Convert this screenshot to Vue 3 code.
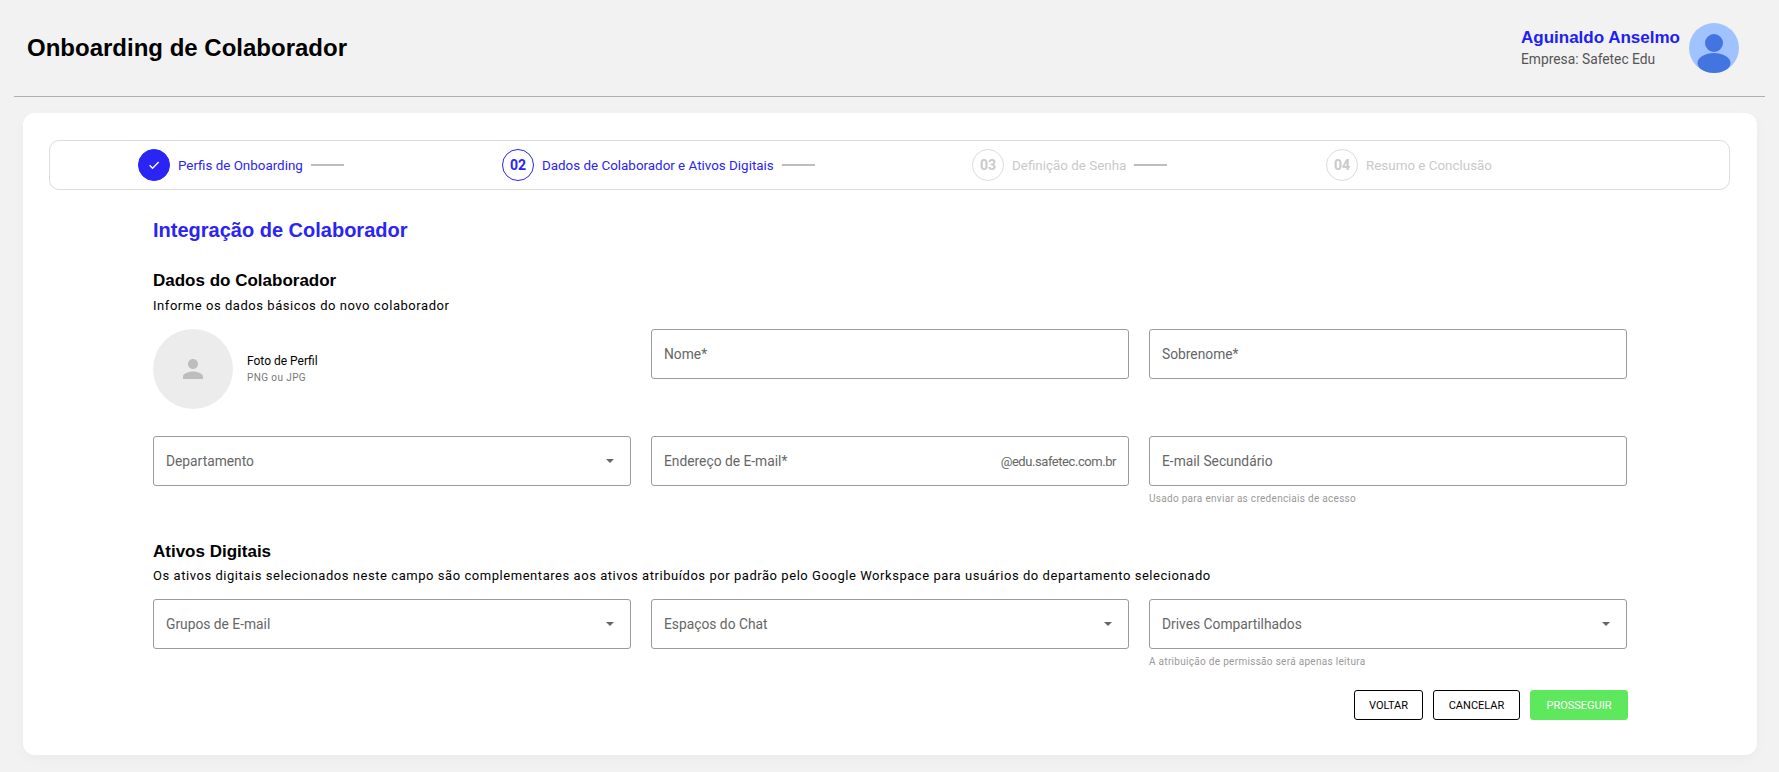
<script setup>
const steps = [
  { n: '', label: 'Perfis de Onboarding', state: 'done', line: true, w: 364 },
  { n: '02', label: 'Dados de Colaborador e Ativos Digitais', state: 'active', line: true, w: 470 },
  { n: '03', label: 'Definição de Senha', state: 'idle', line: true, w: 354 },
  { n: '04', label: 'Resumo e Conclusão', state: 'idle', line: false, w: 200 }
]
</script>

<template>
  <div class="page">
    <header class="top">
      <h1>Onboarding de Colaborador</h1>
      <div class="user">
        <div class="who">
          <div class="uname">Aguinaldo Anselmo</div>
          <div class="ucomp">Empresa: Safetec Edu</div>
        </div>
        <div class="avatar">
          <svg width="50" height="50" viewBox="0 0 50 50">
            <circle cx="25" cy="25" r="25" fill="#a0c3ff" />
            <circle cx="25" cy="20" r="9" fill="#4375e0" />
            <ellipse cx="25" cy="40" rx="16.5" ry="10" fill="#4375e0" />
          </svg>
        </div>
      </div>
    </header>

    <main class="card">
      <div class="stepper">
        <div v-for="s in steps" :key="s.label" class="step" :class="s.state" :style="{ width: s.w + 'px' }">
          <span class="dot">
            <svg v-if="s.state === 'done'" width="14" height="14" viewBox="0 0 24 24">
              <path d="M4.5 12.5l5 5L20 7" fill="none" stroke="#fff" stroke-width="2.4" />
            </svg>
            <template v-else>{{ s.n }}</template>
          </span>
          <span class="slabel">{{ s.label }}</span>
          <span v-if="s.line" class="sline"></span>
        </div>
      </div>

      <section class="form">
        <h2>Integração de Colaborador</h2>

        <h3 class="first">Dados do Colaborador</h3>
        <p class="desc">Informe os dados básicos do novo colaborador</p>

        <div class="grid r1">
          <div class="photo">
            <div class="pcircle">
              <svg width="30" height="30" viewBox="0 0 24 24">
                <path fill="#bdbdbd" d="M12 12c2.21 0 4-1.79 4-4s-1.79-4-4-4-4 1.79-4 4 1.79 4 4 4zm0 2c-2.67 0-8 1.34-8 4v2h16v-2c0-2.66-5.33-4-8-4z" />
              </svg>
            </div>
            <div>
              <div class="ptitle">Foto de Perfil</div>
              <div class="psub">PNG ou JPG</div>
            </div>
          </div>
          <div class="field"><span>Nome*</span></div>
          <div class="field"><span>Sobrenome*</span></div>
        </div>

        <div class="grid r2">
          <div class="field"><span>Departamento</span><i class="caret"></i></div>
          <div class="field"><span>Endereço de E-mail*</span><em>@edu.safetec.com.br</em></div>
          <div>
            <div class="field"><span>E-mail Secundário</span></div>
            <div class="hint">Usado para enviar as credenciais de acesso</div>
          </div>
        </div>

        <h3 class="second">Ativos Digitais</h3>
        <p class="desc d2">Os ativos digitais selecionados neste campo são complementares aos ativos atribuídos por padrão pelo Google Workspace para usuários do departamento selecionado</p>

        <div class="grid r3">
          <div class="field"><span>Grupos de E-mail</span><i class="caret"></i></div>
          <div class="field"><span>Espaços do Chat</span><i class="caret"></i></div>
          <div>
            <div class="field"><span>Drives Compartilhados</span><i class="caret"></i></div>
            <div class="hint">A atribuição de permissão será apenas leitura</div>
          </div>
        </div>

        <div class="actions">
          <button class="btn">VOLTAR</button>
          <button class="btn">CANCELAR</button>
          <button class="btn go">PROSSEGUIR</button>
        </div>
      </section>
    </main>
  </div>
</template>

<style>
html, body { margin: 0; background: #f2f2f2; }
</style>

<style scoped>
.page {
  width: 1779px;
  height: 772px;
  background: #f2f2f2;
  font-family: Roboto, "Liberation Sans", sans-serif;
  overflow: hidden;
  box-sizing: border-box;
  padding: 0 14px;
}
.top {
  height: 97px;
  border-bottom: 1px solid #b0b0b0;
  display: flex;
  align-items: center;
  justify-content: space-between;
  padding: 0 26px 0 13px;
  box-sizing: border-box;
}
h1 {
  margin: 0;
  font-family: "Liberation Sans", sans-serif;
  font-size: 24px;
  font-weight: 700;
  color: #000;
}
.user { display: flex; align-items: center; gap: 9px; }
.uname { font-family: "Liberation Sans", sans-serif; font-size: 17px; font-weight: 700; color: #2020f5; line-height: 20px; }
.ucomp { font-size: 13.8px; color: #555; line-height: 20px; margin-top: 1px; }
.avatar { height: 50px; }
.card {
  margin: 16px 8px 0 9px;
  height: 642px;
  box-sizing: border-box;
  background: #fff;
  border-radius: 12px;
  box-shadow: 0 4px 12px rgba(0, 0, 0, 0.03);
  padding: 27px 27px 0 26px;
}
.stepper {
  height: 50px;
  box-sizing: border-box;
  border: 1px solid #dcdcdc;
  border-radius: 10px;
  display: flex;
  align-items: center;
  padding-left: 88px;
}
.step { display: flex; align-items: center; flex: none; font-size: 13.4px; }
.dot {
  width: 32px;
  height: 32px;
  box-sizing: border-box;
  border-radius: 50%;
  border: 1px solid currentColor;
  display: flex;
  align-items: center;
  justify-content: center;
  font-weight: 700;
  font-size: 14px;
  flex: none;
}
.slabel { margin-left: 8px; white-space: nowrap; }
.sline { width: 33px; height: 2px; background: #bdbdbd; margin-left: 8px; }
.step.done, .step.active { color: #2a24f5; }
.step.done .dot { background: #2a24f5; border-color: #2a24f5; }
.step.idle { color: #c9c9c9; }
.step.idle .dot { border-color: #dcdcdc; }
.form { padding: 0 102px 0 104px; }
h2 {
  margin: 0;
  padding-top: 28px;
  font-family: "Liberation Sans", sans-serif;
  font-size: 20px;
  line-height: 24px;
  font-weight: 700;
  color: #2a24f5;
}
h3 {
  margin: 0;
  font-family: "Liberation Sans", sans-serif;
  font-size: 17px;
  line-height: 20px;
  font-weight: 700;
  color: #000;
}
h3.first { margin-top: 29px; }
h3.second { margin-top: 13px; }
.desc {
  margin: 6px 0 0;
  font-size: 13px;
  line-height: 18px;
  letter-spacing: 0.55px;
  color: #000;
}
.d2 { margin-top: 5px; }
.grid {
  display: grid;
  grid-template-columns: repeat(3, 478px);
  column-gap: 20px;
}
.r1 { margin-top: 14px; height: 107px; }
.r2 { height: 93px; }
.r3 { margin-top: 14px; }
.photo { display: flex; align-items: center; gap: 14px; height: 80px; }
.pcircle {
  width: 80px;
  height: 80px;
  border-radius: 50%;
  background: #ececec;
  display: flex;
  align-items: center;
  justify-content: center;
}
.ptitle { font-size: 12px; color: #000; line-height: 16px; }
.psub { font-size: 10px; color: #777; line-height: 14px; margin-top: 2px; letter-spacing: 0.4px; }
.field {
  height: 50px;
  box-sizing: border-box;
  border: 1px solid #9b9b9b;
  border-radius: 3px;
  display: flex;
  align-items: center;
  justify-content: space-between;
  padding: 0 12px;
  font-size: 13.8px;
  color: #666;
}
.field em { font-style: normal; color: #666; font-size: 13px; letter-spacing: -0.44px; }
.caret {
  width: 0;
  height: 0;
  border-left: 4px solid transparent;
  border-right: 4px solid transparent;
  border-top: 4px solid #666;
  margin-right: 4px;
}
.hint {
  font-size: 10px;
  color: #999;
  line-height: 14px;
  margin-top: 6px;
  letter-spacing: 0.3px;
}
.actions {
  display: flex;
  justify-content: flex-end;
  gap: 10px;
  margin-top: 21px;
}
.btn {
  height: 30px;
  box-sizing: border-box;
  border: 1px solid #000;
  border-radius: 3px;
  background: #fff;
  color: #000;
  font: 400 11px Roboto, "Liberation Sans", sans-serif;
  padding: 0;
  width: 69px;
}
.btn + .btn { width: 87px; }
.btn.go { background: #5ee85e; border-color: #5ee85e; color: #fff; width: 98px; }
</style>
